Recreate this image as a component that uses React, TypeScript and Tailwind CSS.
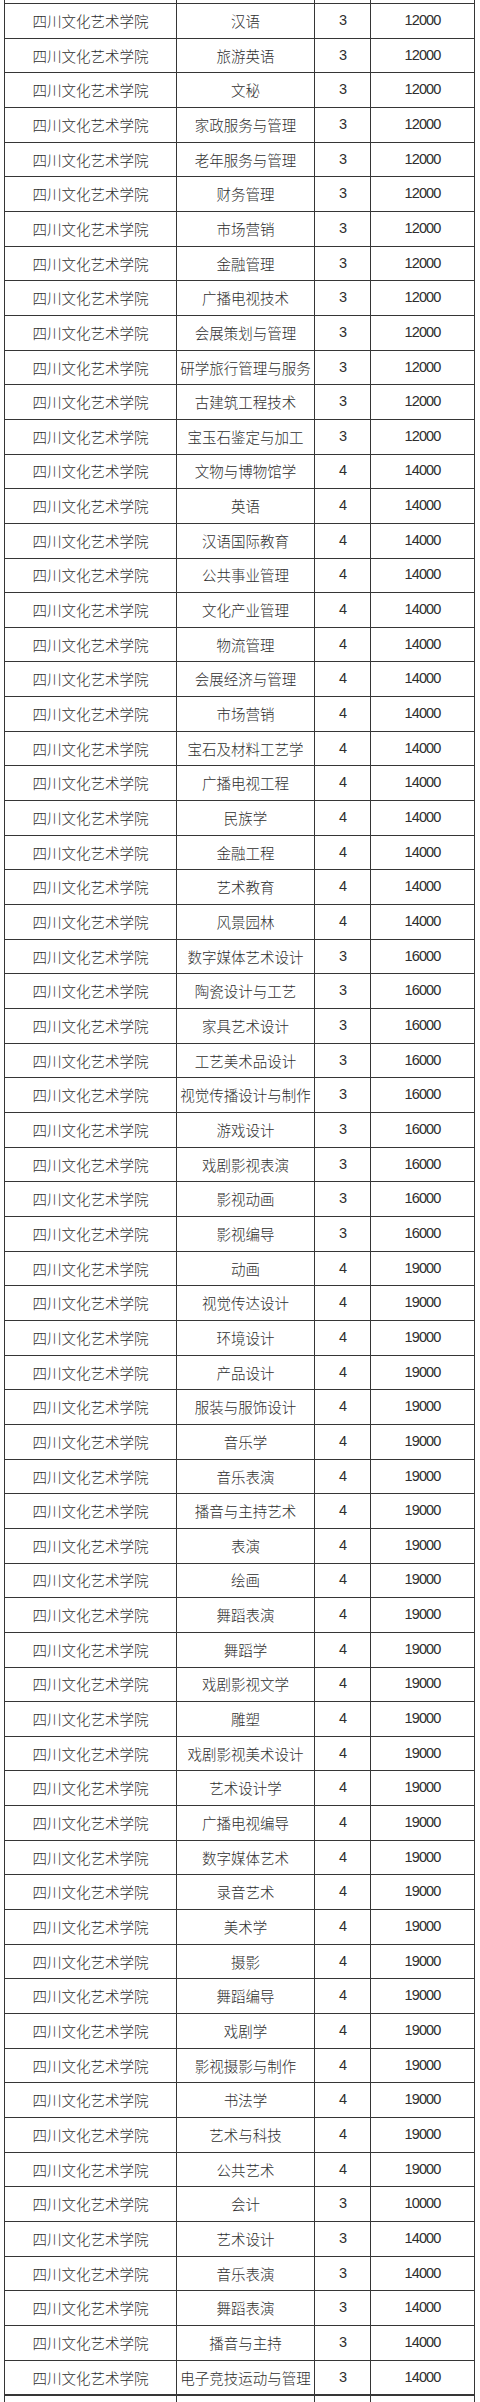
// 四川文化艺术学院 — 专业学费表

type Major = Readonly<{
  name: string
  years: number
  fee: number
}>

const SCHOOL = '四川文化艺术学院'

const majors: ReadonlyArray<Major> = [
  { name: '汉语', years: 3, fee: 12000 },
  { name: '旅游英语', years: 3, fee: 12000 },
  { name: '文秘', years: 3, fee: 12000 },
  { name: '家政服务与管理', years: 3, fee: 12000 },
  { name: '老年服务与管理', years: 3, fee: 12000 },
  { name: '财务管理', years: 3, fee: 12000 },
  { name: '市场营销', years: 3, fee: 12000 },
  { name: '金融管理', years: 3, fee: 12000 },
  { name: '广播电视技术', years: 3, fee: 12000 },
  { name: '会展策划与管理', years: 3, fee: 12000 },
  { name: '研学旅行管理与服务', years: 3, fee: 12000 },
  { name: '古建筑工程技术', years: 3, fee: 12000 },
  { name: '宝玉石鉴定与加工', years: 3, fee: 12000 },
  { name: '文物与博物馆学', years: 4, fee: 14000 },
  { name: '英语', years: 4, fee: 14000 },
  { name: '汉语国际教育', years: 4, fee: 14000 },
  { name: '公共事业管理', years: 4, fee: 14000 },
  { name: '文化产业管理', years: 4, fee: 14000 },
  { name: '物流管理', years: 4, fee: 14000 },
  { name: '会展经济与管理', years: 4, fee: 14000 },
  { name: '市场营销', years: 4, fee: 14000 },
  { name: '宝石及材料工艺学', years: 4, fee: 14000 },
  { name: '广播电视工程', years: 4, fee: 14000 },
  { name: '民族学', years: 4, fee: 14000 },
  { name: '金融工程', years: 4, fee: 14000 },
  { name: '艺术教育', years: 4, fee: 14000 },
  { name: '风景园林', years: 4, fee: 14000 },
  { name: '数字媒体艺术设计', years: 3, fee: 16000 },
  { name: '陶瓷设计与工艺', years: 3, fee: 16000 },
  { name: '家具艺术设计', years: 3, fee: 16000 },
  { name: '工艺美术品设计', years: 3, fee: 16000 },
  { name: '视觉传播设计与制作', years: 3, fee: 16000 },
  { name: '游戏设计', years: 3, fee: 16000 },
  { name: '戏剧影视表演', years: 3, fee: 16000 },
  { name: '影视动画', years: 3, fee: 16000 },
  { name: '影视编导', years: 3, fee: 16000 },
  { name: '动画', years: 4, fee: 19000 },
  { name: '视觉传达设计', years: 4, fee: 19000 },
  { name: '环境设计', years: 4, fee: 19000 },
  { name: '产品设计', years: 4, fee: 19000 },
  { name: '服装与服饰设计', years: 4, fee: 19000 },
  { name: '音乐学', years: 4, fee: 19000 },
  { name: '音乐表演', years: 4, fee: 19000 },
  { name: '播音与主持艺术', years: 4, fee: 19000 },
  { name: '表演', years: 4, fee: 19000 },
  { name: '绘画', years: 4, fee: 19000 },
  { name: '舞蹈表演', years: 4, fee: 19000 },
  { name: '舞蹈学', years: 4, fee: 19000 },
  { name: '戏剧影视文学', years: 4, fee: 19000 },
  { name: '雕塑', years: 4, fee: 19000 },
  { name: '戏剧影视美术设计', years: 4, fee: 19000 },
  { name: '艺术设计学', years: 4, fee: 19000 },
  { name: '广播电视编导', years: 4, fee: 19000 },
  { name: '数字媒体艺术', years: 4, fee: 19000 },
  { name: '录音艺术', years: 4, fee: 19000 },
  { name: '美术学', years: 4, fee: 19000 },
  { name: '摄影', years: 4, fee: 19000 },
  { name: '舞蹈编导', years: 4, fee: 19000 },
  { name: '戏剧学', years: 4, fee: 19000 },
  { name: '影视摄影与制作', years: 4, fee: 19000 },
  { name: '书法学', years: 4, fee: 19000 },
  { name: '艺术与科技', years: 4, fee: 19000 },
  { name: '公共艺术', years: 4, fee: 19000 },
  { name: '会计', years: 3, fee: 10000 },
  { name: '艺术设计', years: 3, fee: 14000 },
  { name: '音乐表演', years: 3, fee: 14000 },
  { name: '舞蹈表演', years: 3, fee: 14000 },
  { name: '播音与主持', years: 3, fee: 14000 },
  { name: '电子竞技运动与管理', years: 3, fee: 14000 },
]

const gridCols = 'grid grid-cols-[172px_138px_56px_104px]'
const cell = 'flex items-center justify-center whitespace-nowrap border-r border-[#363636]'
const cjk = "font-['Noto_Sans_CJK_SC','Noto_Sans_CJK_JP',sans-serif] text-[14.5px] font-light text-[#2e2e2e]"
const num = "font-['Liberation_Sans',Arial,sans-serif] text-[14.5px] tracking-[-0.9px] text-[#2e2e2e]"

function EdgeRow({ height }: Readonly<{ height: string }>) {
  return (
    <div className={`${gridCols} ${height}`}>
      <div className={cell} />
      <div className={cell} />
      <div className={cell} />
      <div className={cell} />
    </div>
  )
}

export default function App() {
  return (
    <div className="h-[2402px] w-[480px] overflow-hidden bg-white">
      <div className="ml-[4px] w-[471px] border-l border-[#363636]">
        <EdgeRow height="h-[3px]" />
        <div className="border-t border-[#363636]">
          {majors.map((m, i) => (
            <div key={i} className={`${gridCols} h-[34.67px] border-b border-[#363636]`}>
              <div className={`${cell} ${cjk}`}>{SCHOOL}</div>
              <div className={`${cell} ${cjk}`}>{m.name}</div>
              <div className={`${cell} ${num}`}>{m.years}</div>
              <div className={`${cell} ${num}`}>{m.fee}</div>
            </div>
          ))}
        </div>
        <div className="border-t border-[#363636]">
          <EdgeRow height="h-[8px]" />
        </div>
      </div>
    </div>
  )
}
